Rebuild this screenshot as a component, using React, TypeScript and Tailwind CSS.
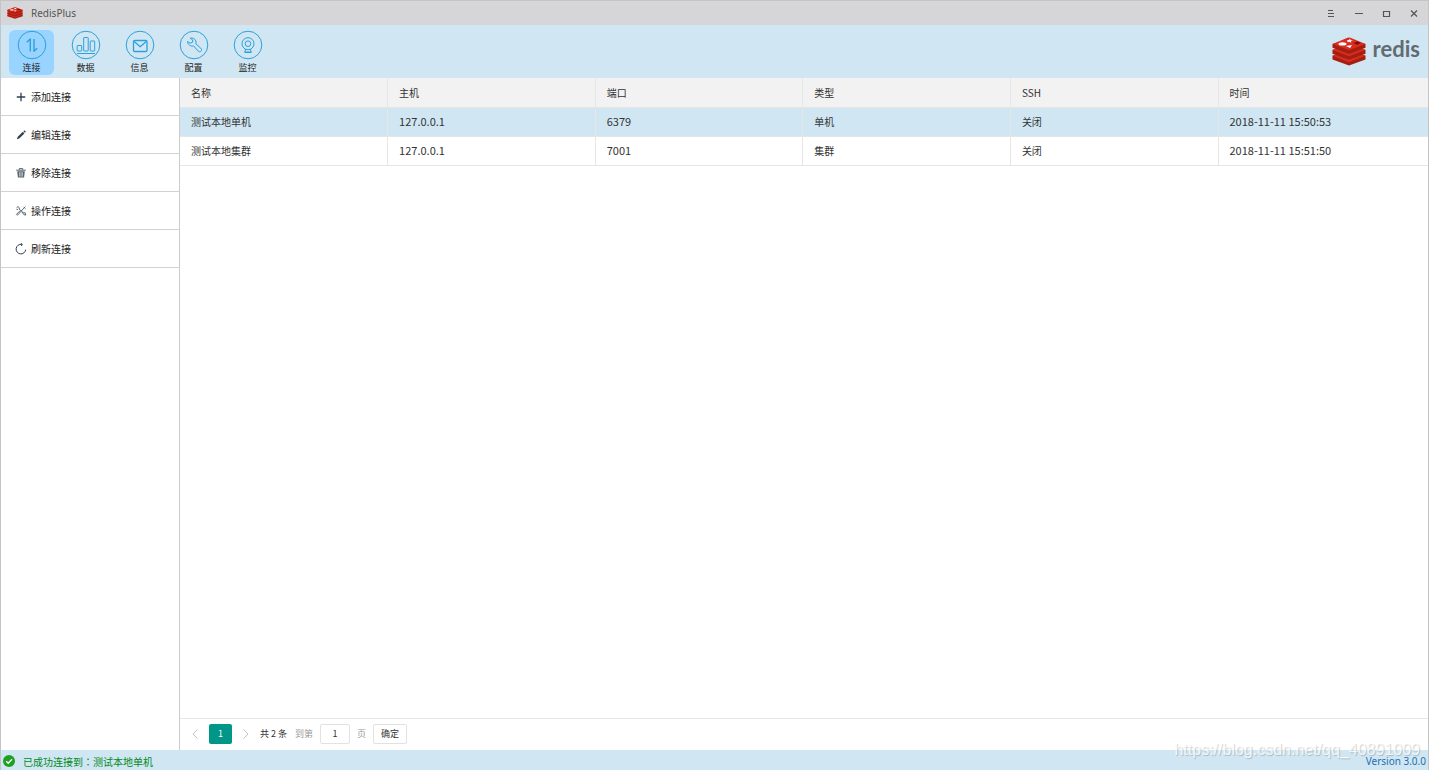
import { useState } from 'react';
import type { ReactNode } from 'react';
import clsx from 'clsx';

interface Connection {
  name: string;
  host: string;
  port: string;
  type: string;
  ssh: string;
  time: string;
}

const connections: Connection[] = [
  { name: '测试本地单机', host: '127.0.0.1', port: '6379', type: '单机', ssh: '关闭', time: '2018-11-11 15:50:53' },
  { name: '测试本地集群', host: '127.0.0.1', port: '7001', type: '集群', ssh: '关闭', time: '2018-11-11 15:51:50' },
];

const columns = ['名称', '主机', '端口', '类型', 'SSH', '时间'];

// Toolbar glyphs share one 30x30 box with the ring around them
const tabs: { label: string; icon: ReactNode }[] = [
  {
    label: '连接',
    icon: <path d="M9.800 12.200 13.300 9v12.500M17 9v12.200l3.200-3" strokeWidth="1.400" />,
  },
  {
    label: '数据',
    icon: (
      <>
        <rect x="6.200" y="15.500" width="4.500" height="5.500" rx=".5" />
        <rect x="12.700" y="7.500" width="4.500" height="13.500" rx=".5" />
        <rect x="19.200" y="11" width="4.500" height="10" rx=".5" />
        <path d="M6 23.500h18" />
      </>
    ),
  },
  {
    label: '信息',
    icon: (
      <>
        <rect x="8.500" y="10.500" width="13.500" height="11" rx="1.200" strokeWidth="1.300" />
        <path d="m9.200 11.500 6 5.300 6-5.300" strokeWidth="1.200" />
      </>
    ),
  },
  {
    label: '配置',
    icon: (
      <path d="M11.200 8.200c2.800-.8 5.600 1 5.800 3.800.1.700 0 1.200-.2 1.800l5 4.400c1 .9 1.100 2.200.2 3-.8.800-2.100.7-3-.3l-4.400-5c-3.200.9-6-1.400-6.100-4.400l2.600 1.700 2.400-.9.300-2.300z" />
    ),
  },
  {
    label: '监控',
    icon: (
      <>
        <circle cx="15" cy="13.700" r="6" />
        <circle cx="15" cy="13.700" r="2.800" />
        <path d="m12.700 19.200-.9 2.800h6.400l-.9-2.800M11.500 22.500h7" />
      </>
    ),
  },
];

const actions: { label: string; icon: ReactNode }[] = [
  {
    label: '添加连接',
    icon: <path d="M6 1.800v8.400M1.800 6h8.400" stroke="currentColor" strokeWidth="1.300" />,
  },
  {
    label: '编辑连接',
    icon: (
      <path
        d="M2 10.200 2.600 8l5.200-5.200 1.600 1.600-5.200 5.200zM8.400 2.200l.6-.6c.7-.6 2.200.8 1.500 1.600l-.6.6z"
        fill="currentColor"
      />
    ),
  },
  {
    label: '移除连接',
    icon: (
      <g opacity=".8">
        <path d="M1.200 3.200h9.600M4.300 2.900V1.600h3.400v1.300" fill="none" stroke="currentColor" />
        <path d="M2.200 4.200h7.600L9.100 10.600H2.900z" fill="currentColor" />
        <path d="M4.600 5.200v4.400M6 5.200v4.400M7.400 5.200v4.400" stroke="#fff" strokeWidth=".6" />
      </g>
    ),
  },
  {
    label: '操作连接',
    icon: (
      <g fill="none" stroke="currentColor" strokeWidth=".9" opacity=".85">
        <path d="M10.400 1.600 6.200 6l-3.600 4.200-1.200-.8 3.800-3.800" />
        <path d="M1.600 2.400 3 1.600l1.400 1.200-.2 1.400 4 3.400 2 .2.600 2.200-1.800-.2L7 7.200M1.400 4.200l1.600.4M8.600 1.800l1.800 1.800" />
      </g>
    ),
  },
  {
    label: '刷新连接',
    icon: (
      <g fill="none" stroke="currentColor">
        <path d="M10.700 6.600A4.800 4.800 0 1 1 6.800 1.400" />
        <path d="M5.800.2 7.400 1.500 6.200 3" />
      </g>
    ),
  },
];

function RedisCube({ className }: { className: string }) {
  return (
    <svg viewBox="0 0 34 30" preserveAspectRatio="none" className={className} aria-hidden="true">
      <path d="M.5 19.500 17 13l16.500 6.500v3.700L17 29.600.5 23.200z" fill="#a41e11" />
      <path d="M.5 19.500 17 12l16.500 7.500L17 26z" fill="#d82c20" />
      <path d="M.5 13.500 17 7l16.500 6.500v3.700L17 23.600.5 17.200z" fill="#a41e11" />
      <path d="M.5 13.500 17 6l16.500 7.500L17 20z" fill="#d82c20" />
      <path d="M.5 7.200 17 2l16.500 5.200v4L17 17.500.5 11.200z" fill="#a41e11" />
      <path d="M.5 7.200 15.500.8q1.500-.6 3 0L33.500 7.200 17 13.800z" fill="#d82c20" />
      <ellipse cx="10.500" cy="7.200" rx="4" ry="1.700" fill="#fff" />
      <path d="m14.500 3 2.300.2 1.300-1.300.6 1.400 2.300.3-2 .9.200 1.400-2-.9-2.200.5.800-1.500z" fill="#fff" />
      <path d="m13.800 9.300 6.200-1-1.900 3.200z" fill="#fff" />
      <path d="m21.500 6.300 4-1.700 3.300 1.500-3.700 1.800z" fill="#7a0c00" />
    </svg>
  );
}

function TitleBar() {
  return (
    <header className="flex h-[25px] items-center justify-between border-t border-[#c4c4c6] bg-[#d6d5d7] pl-1.5 pr-2 text-[#555]">
      <div className="flex items-center gap-2">
        <RedisCube className="h-3 w-4" />
        <h1 className="font-['Noto_Sans'] text-[10px]">RedisPlus</h1>
      </div>
      <div className="flex items-center gap-4">
        <button aria-label="菜单">
          <svg viewBox="0 0 12 12" className="size-3" fill="none" stroke="currentColor">
            <path d="M4 3.500h5M4 6.500h6M4 9.500h6" />
          </svg>
        </button>
        <button aria-label="最小化">
          <svg viewBox="0 0 12 12" className="size-3" fill="none" stroke="currentColor">
            <path d="M3 6.500h8" />
          </svg>
        </button>
        <button aria-label="最大化">
          <svg viewBox="0 0 12 12" className="size-3" fill="none" stroke="currentColor" strokeWidth="1.200">
            <path d="M3.500 4.500h6v5h-6z" />
          </svg>
        </button>
        <button aria-label="关闭">
          <svg viewBox="0 0 12 12" className="size-3" fill="none" stroke="currentColor" strokeWidth="1.200">
            <path d="m3 3.500 6 6M9 3.500l-6 6" />
          </svg>
        </button>
      </div>
    </header>
  );
}

function Toolbar() {
  const [active, setActive] = useState('连接');

  return (
    <div className="flex h-[53px] items-start justify-between bg-[#d0e7f3] px-2">
      <nav className="flex gap-[9px] pt-[5px]">
        {tabs.map((tab) => (
          <button
            key={tab.label}
            onClick={() => setActive(tab.label)}
            className={clsx(
              'flex h-[45px] w-[45px] flex-col items-center gap-px rounded-md text-[9px] leading-[14px] text-[#222]',
              active === tab.label && 'bg-[#99d3ff]'
            )}
          >
            <svg viewBox="0 0 30 30" className="size-[30px]" fill="none" stroke="#2ba0dc" strokeLinejoin="round">
              <circle cx="15" cy="15" r="13.800" />
              {tab.icon}
            </svg>
            {tab.label}
          </button>
        ))}
      </nav>
      <div className="flex items-start gap-[7px] pt-3">
        <RedisCube className="h-[29px] w-[34px]" />
        <span className="font-['Lato'] text-[22px] leading-6 font-bold text-[#636b70]">redis</span>
      </div>
    </div>
  );
}

function Sidebar() {
  return (
    <aside className="w-[179px] shrink-0 border-r border-[#ccc] bg-white">
      <ul>
        {actions.map((action) => (
          <li key={action.label} className="border-b border-[#d2d2d2]">
            <button className="flex h-[37px] w-full items-center gap-1 pl-3.5 text-[10px] text-[#222]">
              <svg viewBox="0 0 12 12" className="size-3 text-[#2f3f4c]">
                {action.icon}
              </svg>
              {action.label}
            </button>
          </li>
        ))}
      </ul>
    </aside>
  );
}

function ConnectionTable() {
  const [selected, setSelected] = useState(0);

  return (
    <table className="w-full table-fixed border-collapse text-left text-[10px] text-[#333]">
      <thead>
        <tr className="h-[29px] border-b border-[#e6e6e6] bg-[#f2f2f2]">
          {columns.map((column) => (
            <th
              key={column}
              className="border-r border-[#e6e6e6] px-[11px] font-normal last:w-[210px] last:border-r-0"
            >
              {column}
            </th>
          ))}
        </tr>
      </thead>
      <tbody>
        {connections.map((c, i) => (
          <tr
            key={c.name}
            onClick={() => setSelected(i)}
            className={clsx('h-[29px] border-b border-[#e6e6e6]', selected === i && 'bg-[#d0e7f3]')}
          >
            {[c.name, c.host, c.port, c.type, c.ssh, c.time].map((value, n) => (
              <td
                key={columns[n]}
                className={clsx(
                  'border-r border-[#e6e6e6] px-[11px] last:border-r-0',
                  [1, 2, 5].includes(n) && 'text-[11px]'
                )}
              >
                {value}
              </td>
            ))}
          </tr>
        ))}
      </tbody>
    </table>
  );
}

function Pagination() {
  const [page, setPage] = useState('1');

  return (
    <div className="flex h-8 items-center border-t border-[#e6e6e6] pb-0.5 pl-[9px] text-[9px] text-[#333]">
      <button aria-label="上一页" className="text-[#c2c2c2]">
        <svg viewBox="0 0 12 12" className="size-3" fill="none" stroke="currentColor">
          <path d="M8.500 1.500 4 6l4.500 4.500" />
        </svg>
      </button>
      <button className="ml-2 h-5 w-[23px] rounded-xs bg-[#009688] text-white">1</button>
      <button aria-label="下一页" className="ml-2 text-[#c2c2c2]">
        <svg viewBox="0 0 12 12" className="size-3" fill="none" stroke="currentColor">
          <path d="M3.500 1.500 8 6l-4.500 4.500" />
        </svg>
      </button>
      <span className="ml-2">共 2 条</span>
      <label htmlFor="page" className="ml-2 text-[#999]">
        到第
      </label>
      <input
        id="page"
        value={page}
        onChange={(e) => setPage(e.target.value)}
        className="ml-[7px] h-5 w-[30px] rounded-xs border border-[#e2e2e2] bg-white text-center"
      />
      <span className="ml-[7px] text-[#999]">页</span>
      <button className="ml-[7px] h-5 w-[34px] rounded-xs border border-[#e2e2e2] bg-white">确定</button>
    </div>
  );
}

function StatusBar() {
  return (
    <footer className="flex h-5 items-center justify-between bg-[#d0e7f3] px-0.5 pt-0.5 text-[10px]">
      <div className="flex items-center gap-2 text-[#008a1c]">
        <svg viewBox="0 0 12 12" className="size-3" aria-hidden="true">
          <circle cx="6" cy="6" r="6" fill="#20a020" />
          <path d="m3.200 6.200 2 2 3.800-4" fill="none" stroke="#fff" strokeWidth="1.300" />
        </svg>
        <p>
          已成功连接到<span className="font-['Noto_Sans_CJK_TC']">：</span>测试本地单机
        </p>
      </div>
      <span className="relative z-10 font-['Noto_Sans'] text-[#1f6fb2]">Version 3.0.0</span>
    </footer>
  );
}

export default function App() {
  return (
    <div className="relative flex min-h-screen flex-col border-x border-[#c4c4c6] bg-white font-['Noto_Sans_CJK_SC',sans-serif]">
      <TitleBar />
      <Toolbar />
      <div className="flex flex-1">
        <Sidebar />
        <main className="flex min-w-0 flex-1 flex-col">
          <div className="flex-1">
            <ConnectionTable />
          </div>
          <Pagination />
        </main>
      </div>
      <StatusBar />
      <span className="pointer-events-none absolute right-2 bottom-2 font-['Liberation_Sans'] text-base text-white/80 [text-shadow:1px_1px_1px_rgba(0,0,0,0.2)]">
        https://blog.csdn.net/qq_40891009
      </span>
    </div>
  );
}
